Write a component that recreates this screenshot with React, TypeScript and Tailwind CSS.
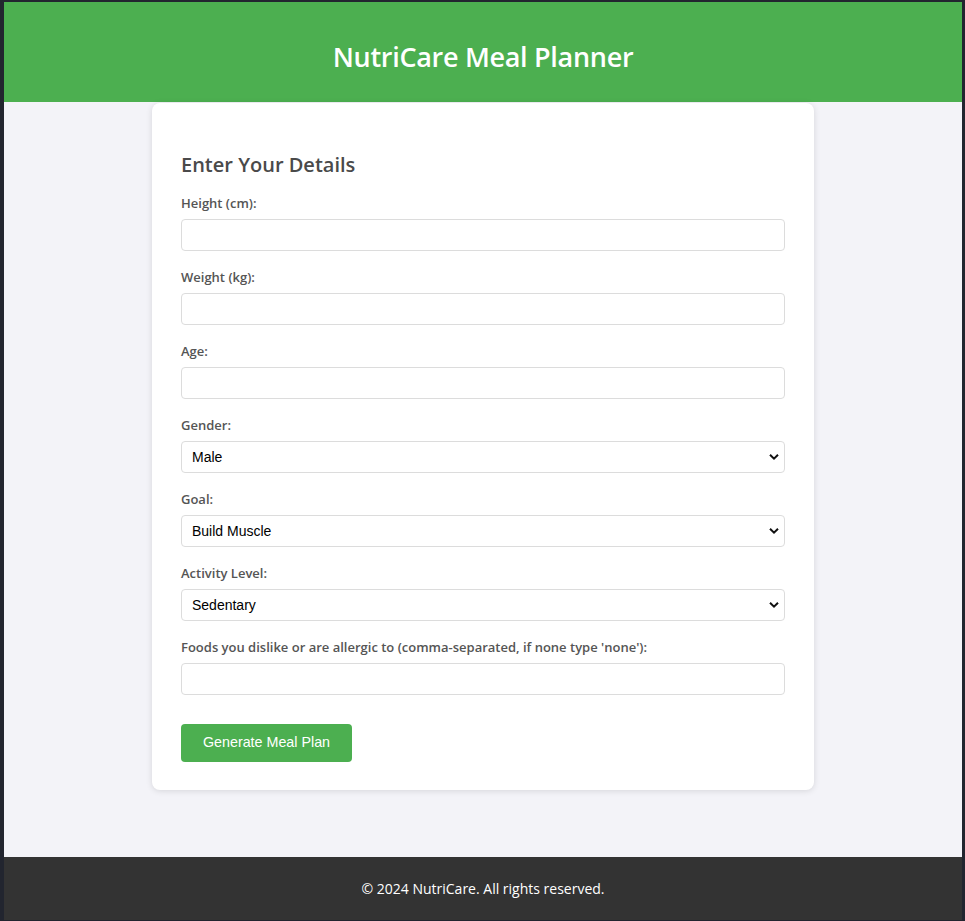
import { useState } from 'react';

const SANS = "font-['Open_Sans',_'Noto_Sans',_sans-serif]";

const Chevron = () => (
  <svg
    className="pointer-events-none absolute right-[6px] top-1/2 -translate-y-1/2"
    width="10"
    height="7"
    viewBox="0 0 10 7"
  >
    <path d="M1 1.2 L5 5.2 L9 1.2" fill="none" stroke="#111" strokeWidth="2" />
  </svg>
);

const Field = ({ label, children }: { label: string; children: React.ReactNode }) => (
  <div className="flex flex-col">
    <label className={`${SANS} text-[13px] font-semibold text-[#555] leading-[18px] mb-[7px]`}>{label}</label>
    {children}
  </div>
);

const inputCls =
  "h-[32px] w-full rounded-[4px] border border-[#dcdcdc] bg-white px-[10px] text-[14px] font-['Liberation_Sans',_Arial,_sans-serif] text-black outline-none";

const Select = ({ options, value, onChange }: { options: string[]; value: string; onChange: (v: string) => void }) => (
  <div className="relative">
    <select
      value={value}
      onChange={(e) => onChange(e.target.value)}
      className={`${inputCls} appearance-none`}
    >
      {options.map((o) => (
        <option key={o}>{o}</option>
      ))}
    </select>
    <Chevron />
  </div>
);

export default function App() {
  const [gender, setGender] = useState('Male');
  const [goal, setGoal] = useState('Build Muscle');
  const [activity, setActivity] = useState('Sedentary');

  return (
    <div className="min-h-[921px] w-[965px] bg-[#22252f] pt-[2px] pl-[4px] pr-[3px] pb-[1px]">
      <div className="flex h-[918px] flex-col bg-[#f3f3f8]">
        <header className="flex h-[100px] shrink-0 items-center justify-center bg-[#4caf50] pt-[10px]">
          <h1 className={`${SANS} text-[27px] font-semibold text-white tracking-[-0.3px]`}>NutriCare Meal Planner</h1>
        </header>

        <main className="flex flex-1 justify-center pt-[1px]">
          <div className="h-[687px] w-[662px] rounded-[8px] bg-white px-[29px] pt-[47px] shadow-[0_1px_6px_rgba(0,0,0,0.12)]">
            <h2 className={`${SANS} text-[20px] font-semibold text-[#4a4a4a] leading-[30px] mb-[14px]`}>Enter Your Details</h2>
            <div className="flex flex-col gap-[17px]">
              <Field label="Height (cm):">
                <input className={inputCls} />
              </Field>
              <Field label="Weight (kg):">
                <input className={inputCls} />
              </Field>
              <Field label="Age:">
                <input className={inputCls} />
              </Field>
              <Field label="Gender:">
                <Select options={['Male', 'Female']} value={gender} onChange={setGender} />
              </Field>
              <Field label="Goal:">
                <Select options={['Build Muscle', 'Lose Weight', 'Maintain Weight']} value={goal} onChange={setGoal} />
              </Field>
              <Field label="Activity Level:">
                <Select
                  options={['Sedentary', 'Lightly Active', 'Moderately Active', 'Very Active']}
                  value={activity}
                  onChange={setActivity}
                />
              </Field>
              <Field label="Foods you dislike or are allergic to (comma-separated, if none type 'none'):">
                <input className={inputCls} />
              </Field>
            </div>
            <button className="mt-[29px] h-[38px] w-[171px] rounded-[4px] bg-[#4caf50] text-[14.3px] text-white font-['Liberation_Sans',_Arial,_sans-serif]">
              Generate Meal Plan
            </button>
          </div>
        </main>

        <footer className="flex h-[63px] shrink-0 items-center justify-center bg-[#333]">
          <p className={`${SANS} text-[14px] text-white`}>© 2024 NutriCare. All rights reserved.</p>
        </footer>
      </div>
    </div>
  );
}
